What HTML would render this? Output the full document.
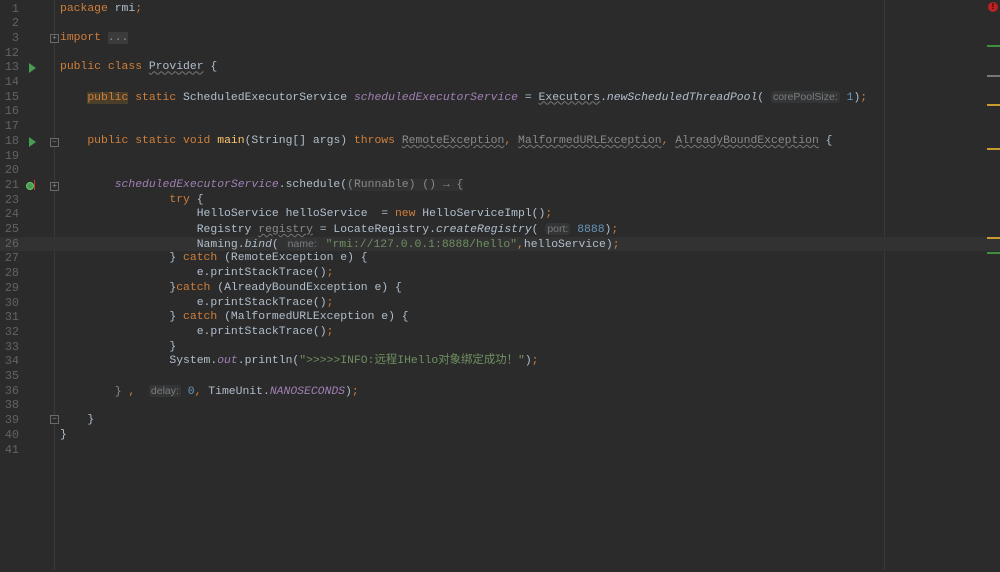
<!DOCTYPE html>
<html><head><meta charset="utf-8"><style>
body{margin:0;width:1000px;height:570px;background:#2b2b2b;overflow:hidden;position:relative;font-family:"Liberation Mono","Noto Sans CJK SC",monospace;font-size:11.4px;color:#b1bfcd}
.gut{position:absolute;left:54px;top:0;width:1px;height:570px;background:#3a3a3a}
.rm{position:absolute;left:884px;top:0;width:1px;height:570px;background:#3a3a3a}
#w{position:absolute;left:0;top:1.5px;width:1000px;height:570px}
.r{position:absolute;left:0;width:1000px;height:14.7px;line-height:14.7px;white-space:pre}
.n{position:absolute;left:0;width:19px;text-align:right;color:#606366;font-size:11.8px}
.c{position:absolute;left:60px}
.k{color:#d07f3a}.p{color:#9876aa}.pi{color:#a07fb4;font-style:italic}.i{font-style:italic}
.s{color:#6f9060}.num{color:#6897bb}.m{color:#ffc66d}.g{color:#8a8a8a}
.h{font-family:"Liberation Sans",sans-serif;font-size:10.5px;color:#7c7c7c;background:#333536;padding:0 2px;border-radius:3px}
.u{text-decoration:underline wavy #777;text-decoration-thickness:1px}
.cur{background:#323232}
.mk{position:absolute;left:987px;width:13px;height:2px}
.run{position:absolute;left:29px;width:0;height:0;border-left:7px solid #499c54;border-top:5px solid transparent;border-bottom:5px solid transparent}
.fold{position:absolute;left:50px;width:7px;height:7px;border:1px solid #6a6a6a;background:#2b2b2b;font-size:8px;line-height:7px;text-align:center;color:#888}
</style></head><body>
<div class="gut"></div><div class="rm"></div>
<div id="w">
<div class="r cur" style="top:235.2px"></div>
<div class="r" style="top:0"><span class="n">1</span><span class="c"><span class="k">package</span> rmi<span class="k">;</span></span></div>
<div class="r" style="top:14.7px"><span class="n">2</span></div>
<div class="r" style="top:29.4px"><span class="n">3</span><span class="c"><span class="k">import</span> <span class="g" style="background:#3b3b3b">...</span></span></div>
<div class="r" style="top:44.1px"><span class="n">12</span></div>
<div class="r" style="top:58.8px"><span class="n">13</span><span class="c"><span class="k">public class</span> <span class="u">Provider</span> {</span></div>
<div class="r" style="top:73.5px"><span class="n">14</span></div>
<div class="r" style="top:88.2px"><span class="n">15</span><span class="c">    <span class="k" style="background:#4a3f2a">public</span><span class="k"> static</span> ScheduledExecutorService <span class="pi">scheduledExecutorService</span> = <span class="u">Executors</span>.<span class="i">newScheduledThreadPool</span>( <span class="h">corePoolSize:</span> <span class="num">1</span>)<span class="k">;</span></span></div>
<div class="r" style="top:102.9px"><span class="n">16</span></div>
<div class="r" style="top:117.6px"><span class="n">17</span></div>
<div class="r" style="top:132.3px"><span class="n">18</span><span class="c">    <span class="k">public static void</span> <span class="m">main</span>(String[] args) <span class="k">throws</span> <span class="g u">RemoteException</span><span class="k">,</span> <span class="g u">MalformedURLException</span><span class="k">,</span> <span class="g u">AlreadyBoundException</span> {</span></div>
<div class="r" style="top:147px"><span class="n">19</span></div>
<div class="r" style="top:161.7px"><span class="n">20</span></div>
<div class="r" style="top:176.4px"><span class="n">21</span><span class="c">        <span class="pi">scheduledExecutorService</span>.schedule(<span class="g" style="background:#313131">(Runnable) () → {</span></span></div>
<div class="r" style="top:191.1px"><span class="n">23</span><span class="c">                <span class="k">try</span> {</span></div>
<div class="r" style="top:205.8px"><span class="n">24</span><span class="c">                    HelloService helloService  = <span class="k">new</span> HelloServiceImpl()<span class="k">;</span></span></div>
<div class="r" style="top:220.5px"><span class="n">25</span><span class="c">                    Registry <span class="g u">registry</span> = LocateRegistry.<span class="i">createRegistry</span>( <span class="h">port:</span> <span class="num">8888</span>)<span class="k">;</span></span></div>
<div class="r" style="top:235.2px"><span class="n">26</span><span class="c">                    Naming.<span class="i">bind</span>( <span class="h">name:</span> <span class="s">"rmi://127.0.0.1:8888/hello"</span><span class="k">,</span>helloService)<span class="k">;</span></span></div>
<div class="r" style="top:249.9px"><span class="n">27</span><span class="c">                } <span class="k">catch</span> (RemoteException e) {</span></div>
<div class="r" style="top:264.6px"><span class="n">28</span><span class="c">                    e.printStackTrace()<span class="k">;</span></span></div>
<div class="r" style="top:279.3px"><span class="n">29</span><span class="c">                }<span class="k">catch</span> (AlreadyBoundException e) {</span></div>
<div class="r" style="top:294px"><span class="n">30</span><span class="c">                    e.printStackTrace()<span class="k">;</span></span></div>
<div class="r" style="top:308.7px"><span class="n">31</span><span class="c">                } <span class="k">catch</span> (MalformedURLException e) {</span></div>
<div class="r" style="top:323.4px"><span class="n">32</span><span class="c">                    e.printStackTrace()<span class="k">;</span></span></div>
<div class="r" style="top:338.1px"><span class="n">33</span><span class="c">                }</span></div>
<div class="r" style="top:352.8px"><span class="n">34</span><span class="c">                System.<span class="pi">out</span>.println(<span class="s">"&gt;&gt;&gt;&gt;&gt;INFO:远程IHello对象绑定成功！"</span>)<span class="k">;</span></span></div>
<div class="r" style="top:367.5px"><span class="n">35</span></div>
<div class="r" style="top:382.2px"><span class="n">36</span><span class="c">        <span class="g">}</span> <span class="k">,</span>  <span class="h">delay:</span> <span class="num">0</span><span class="k">,</span> TimeUnit.<span class="pi">NANOSECONDS</span>)<span class="k">;</span></span></div>
<div class="r" style="top:396.9px"><span class="n">38</span></div>
<div class="r" style="top:411.6px"><span class="n">39</span><span class="c">    }</span></div>
<div class="r" style="top:426.3px"><span class="n">40</span><span class="c">}</span></div>
<div class="r" style="top:441px"><span class="n">41</span></div>

<div class="run" style="top:61px"></div>
<div class="run" style="top:135px"></div>
<div style="position:absolute;left:26px;top:180px;width:6px;height:6px;border-radius:50%;background:#499c54;border:1px solid #6c6"></div>
<div style="position:absolute;left:34px;top:178px;width:1px;height:10px;background:#c33"></div>
<div class="fold" style="top:32px">+</div>
<div class="fold" style="top:136px">−</div>
<div class="fold" style="top:180px">+</div>
<div class="fold" style="top:413px">−</div>
</div>
<div style="position:absolute;left:988px;top:2px;width:10px;height:10px;border-radius:50%;background:#b22;color:#300;font:bold 8px/10px 'Liberation Sans',sans-serif;text-align:center">!</div>
<div class="mk" style="top:45px;background:#3f8f3f"></div>
<div class="mk" style="top:75px;background:#777"></div>
<div class="mk" style="top:104px;background:#c99a2e"></div>
<div class="mk" style="top:148px;background:#c99a2e"></div>
<div class="mk" style="top:237px;background:#c99a2e"></div>
<div class="mk" style="top:252px;background:#3f8f3f"></div>
</body></html>
